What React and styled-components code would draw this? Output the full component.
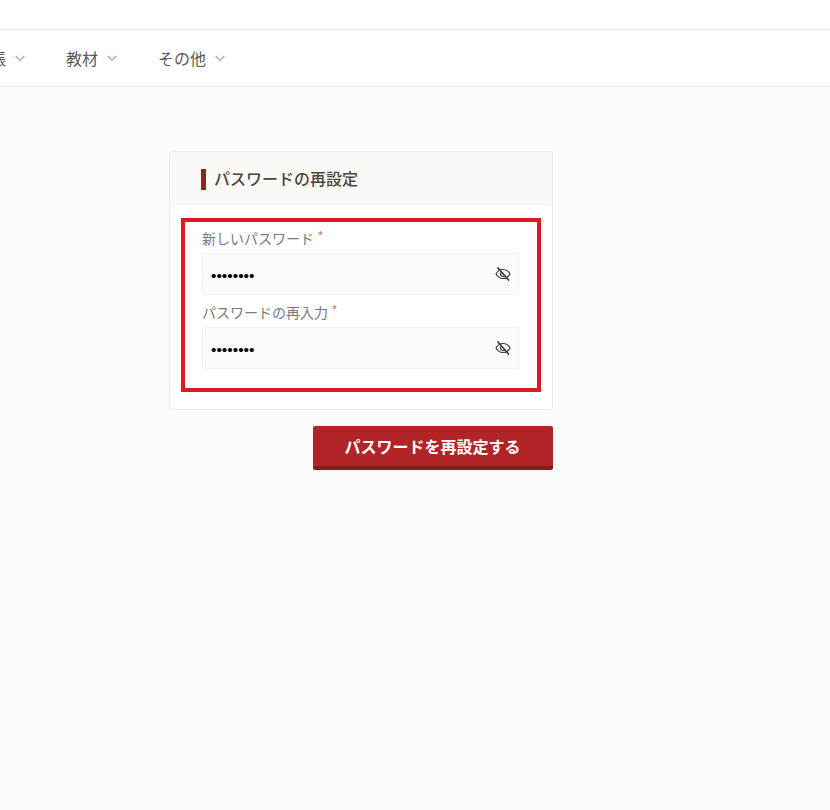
import React from "react";
import styled, { createGlobalStyle } from "styled-components";

const Global = createGlobalStyle`
  html, body { margin: 0; padding: 0; background: #fbfbfb; }
  body { font-family: "Noto Sans", "Noto Sans CJK JP", sans-serif; overflow: hidden; }
`;
const Page = styled.div`
  width: 830px; height: 810px; overflow: hidden; background: #fbfbfb;
`;
const TopBar = styled.div`
  height: 29px; background: #fff; border-bottom: 1px solid #e9e9e9;
`;
const Nav = styled.nav`
  height: 56px; background: #fff; border-bottom: 1px solid #e9e9e9;
  display: flex; align-items: center; overflow: hidden;
`;
const NavList = styled.div`
  display: flex; align-items: center; gap: 41px; margin-left: -10px;
`;
const NavItem = styled.a`
  display: flex; align-items: center; gap: 9px; font-size: 16px; color: #595959;
  font-family: "Noto Sans CJK JP", sans-serif; line-height: 20px;
`;
const Clip = styled.span`
  display: inline-block; width: 16px; overflow: hidden; white-space: nowrap;
`;
const Main = styled.main`
  padding: 64px 0 0 169px; width: 383.500px;
`;
const Card = styled.section`
  background: #fff; border: 1px solid #ececec; border-radius: 3px; box-sizing: border-box; width: 383.500px;
`;
const CardHead = styled.header`
  height: 52px; background: #fbf9f5; border-bottom: 1px solid #f0f0f0;
  display: flex; align-items: center; padding-left: 31px;
`;
const Title = styled.h2`
  margin: 2px 0 0; border-left: 5px solid #8f2222; padding-left: 8px; height: 21px; line-height: 19px;
  font-size: 16px; font-weight: 500; color: #4a453b; font-family: "Noto Sans CJK JP", sans-serif;
`;
const CardBody = styled.div`
  padding: 13px 10.500px 17px 11px;
`;
const Highlight = styled.div`
  border: 4px solid #dc1a24; padding: 10px 18px 19px 17px; display: flex; flex-direction: column; gap: 11px;
`;
const Field = styled.div`
  display: flex; flex-direction: column; gap: 6px;
`;
const Label = styled.label`
  font-size: 14px; line-height: 15px; height: 15px; color: #7d7a77; margin-top: -1px; margin-bottom: 1px;
  font-family: "Noto Sans CJK JP", sans-serif; display: flex;
`;
const Star = styled.span`
  color: #c05a55; font-size: 9px; line-height: 10px; margin-left: 4px; margin-top: -1px;
  font-family: "Noto Sans", sans-serif;
`;
const InputWrap = styled.div`
  height: 42px; box-sizing: border-box; background: #fbfbfb;
  border: 1px solid #f0f0f0; border-radius: 2px; display: flex; align-items: center;
  justify-content: space-between; padding: 0 7px 0 8px;
`;
const Input = styled.input`
  border: 0; outline: 0; background: transparent; flex: 1; min-width: 0; padding: 4px 0 0;
  box-sizing: border-box; font-size: 15.500px; color: #000; font-family: "Liberation Sans", sans-serif; height: 100%;
`;
const Eye = styled.svg`
  width: 16px; height: 16px; fill: none; stroke: #3a3a3a; stroke-width: 1.2; stroke-linecap: round; stroke-linejoin: round; flex: none;
`;
const Actions = styled.div`
  display: flex; justify-content: flex-end; margin-top: 16px;
`;
const Submit = styled.button`
  width: 240px; height: 44px; border: 0; border-bottom: 4px solid #851b1b; border-radius: 2px;
  background: #b12428; color: #fff; font-size: 16px; font-weight: 700;
  font-family: "Noto Sans CJK JP", sans-serif; padding: 0 0 1px;
`;

const Chevron = () => (
  <svg width="10" height="10" viewBox="0 0 10 10" fill="none" stroke="#a3a3a3" strokeWidth="1.1">
    <path d="M.7 3l4.300 4.300L9.300 3" />
  </svg>
);
const EyeIcon = () => (
  <Eye viewBox="0 0 16 16">
    <path d="M1 8c1.600-3 4-4.500 7-4.500S13.400 5 15 8c-1.600 3-4 4.500-7 4.500S2.600 11 1 8z" />
    <path d="M6.300 6.300a2.400 2.400 0 0 0 3.400 3.400" />
    <path d="M3 2l10.500 12" strokeWidth="1.700" />
  </Eye>
);

const PasswordField = ({ label }) => (
  <Field>
    <Label>
      {label}
      <Star>*</Star>
    </Label>
    <InputWrap>
      <Input type="password" defaultValue="password" readOnly />
      <EyeIcon />
    </InputWrap>
  </Field>
);

export default function App() {
  return (
    <Page>
      <Global />
      <TopBar />
      <Nav>
        <NavList>
          <NavItem><Clip dir="rtl">帳</Clip><Chevron /></NavItem>
          <NavItem>教材<Chevron /></NavItem>
          <NavItem>その他<Chevron /></NavItem>
        </NavList>
      </Nav>
      <Main>
        <Card>
          <CardHead><Title>パスワードの再設定</Title></CardHead>
          <CardBody>
            <Highlight>
              <PasswordField label="新しいパスワード" />
              <PasswordField label="パスワードの再入力" />
            </Highlight>
          </CardBody>
        </Card>
        <Actions>
          <Submit>パスワードを再設定する</Submit>
        </Actions>
      </Main>
    </Page>
  );
}
